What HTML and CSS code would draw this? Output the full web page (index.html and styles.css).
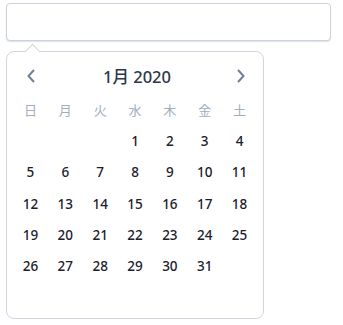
FILE: index.html
```html
<!DOCTYPE html>
<html lang="ja">
<head>
    <meta charset="UTF-8">
    <title>Date Picker</title>
    <link rel="stylesheet" href="styles.css">
</head>
<body>
    <div class="picker">
        <input type="text" class="date-input">
        <div class="calendar">
            <div class="cal-head">
                <button class="nav-btn" aria-label="prev">
                    <svg width="10" height="16" viewBox="0 0 10 16"><path d="M8 2 2.5 8 8 14" fill="none" stroke="currentColor" stroke-width="2"/></svg>
                </button>
                <span class="cal-title">1月 2020</span>
                <button class="nav-btn" aria-label="next">
                    <svg width="10" height="16" viewBox="0 0 10 16"><path d="M2 2l5.5 6L2 14" fill="none" stroke="currentColor" stroke-width="2"/></svg>
                </button>
            </div>
            <div class="cal-grid">
                <span class="wd">日</span><span class="wd">月</span><span class="wd">火</span><span class="wd">水</span><span class="wd">木</span><span class="wd">金</span><span class="wd">土</span>
                <span></span><span></span><span></span>
                <span class="day">1</span><span class="day">2</span><span class="day">3</span><span class="day">4</span>
                <span class="day">5</span><span class="day">6</span><span class="day">7</span><span class="day">8</span><span class="day">9</span><span class="day">10</span><span class="day">11</span>
                <span class="day">12</span><span class="day">13</span><span class="day">14</span><span class="day">15</span><span class="day">16</span><span class="day">17</span><span class="day">18</span>
                <span class="day">19</span><span class="day">20</span><span class="day">21</span><span class="day">22</span><span class="day">23</span><span class="day">24</span><span class="day">25</span>
                <span class="day">26</span><span class="day">27</span><span class="day">28</span><span class="day">29</span><span class="day">30</span><span class="day">31</span><span></span>
                <span></span><span></span><span></span><span></span><span></span><span></span><span></span>
            </div>
        </div>
    </div>
</body>
</html>
```

FILE: styles.css
```css
body {
    margin: 0;
    padding: 3px 12px 0 6px;
    font-family: "Noto Sans", "Noto Sans CJK JP", sans-serif;
    background: #ffffff;
}
.picker {
    width: 325px;
}
.date-input {
    display: block;
    box-sizing: border-box;
    width: 100%;
    height: 38px;
    border: 1px solid #cbd2dc;
    border-radius: 4px;
    box-shadow: 0 1px 1px rgba(160, 174, 192, 0.35);
    outline: none;
}
.calendar {
    position: relative;
    box-sizing: border-box;
    width: 258px;
    height: 268px;
    margin-top: 10px;
    padding: 0 6px;
    border: 1px solid #cfd6df;
    border-radius: 8px;
    background: #ffffff;
}
/* little pointer towards the input */
.calendar::before {
    content: "";
    position: absolute;
    top: -6px;
    left: 20px;
    width: 10px;
    height: 10px;
    background: #ffffff;
    border-top: 1px solid #cfd6df;
    border-left: 1px solid #cfd6df;
    transform: rotate(45deg);
}
.cal-head {
    display: flex;
    align-items: center;
    justify-content: space-between;
    height: 48px;
    padding: 0 11px 0 13px;
}
.cal-title {
    font-size: 16.5px;
    font-weight: 500;
    color: #2d3748;
    margin-left: 2px;
}
.nav-btn {
    display: flex;
    padding: 0;
    border: none;
    background: none;
    color: #718096;
}
.cal-grid {
    display: grid;
    grid-template-columns: repeat(7, 1fr);
    grid-auto-rows: 31.3px;
    align-items: center;
    justify-items: center;
    margin-top: -6px;
}
.wd {
    font-size: 13px;
    color: #a0aec0;
}
.day {
    font-size: 13.5px;
    font-weight: 500;
    color: #1a202c;
}
```
